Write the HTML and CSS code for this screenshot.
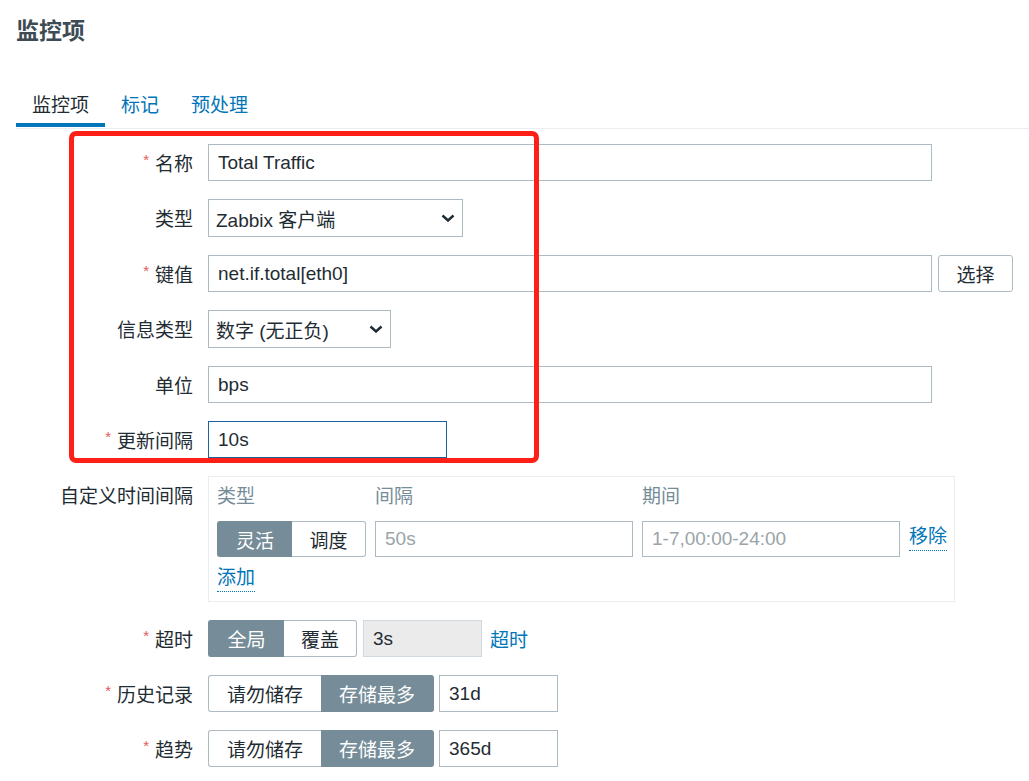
FILE: index.html
```html
<!DOCTYPE html>
<html lang="zh-CN">
<head>
<meta charset="utf-8">
<title>监控项</title>
<link rel="stylesheet" href="styles.css">
</head>
<body>
<div class="page">
  <h1 class="title">监控项</h1>
  <nav class="tabs">
    <a class="tab active">监控项</a>
    <a class="tab">标记</a>
    <a class="tab">预处理</a>
  </nav>
  <form class="form">
    <label class="label"><span class="req">*</span>名称</label>
    <div class="ctrl"><input class="input w-full" type="text" value="Total Traffic"></div>

    <label class="label">类型</label>
    <div class="ctrl"><div class="select w-type"><span>Zabbix 客户端</span><svg class="chev" width="14" height="8" viewBox="0 0 14 8"><path d="M1.5 1.5 L7 6.5 L12.5 1.5" fill="none" stroke="#1f2c33" stroke-width="2.4"/></svg></div></div>

    <label class="label"><span class="req">*</span>键值</label>
    <div class="ctrl"><input class="input w-full" type="text" value="net.if.total[eth0]"><button type="button" class="btn">选择</button></div>

    <label class="label">信息类型</label>
    <div class="ctrl"><div class="select w-info"><span>数字 (无正负)</span><svg class="chev" width="14" height="8" viewBox="0 0 14 8"><path d="M1.5 1.5 L7 6.5 L12.5 1.5" fill="none" stroke="#1f2c33" stroke-width="2.4"/></svg></div></div>

    <label class="label">单位</label>
    <div class="ctrl"><input class="input w-full" type="text" value="bps"></div>

    <label class="label"><span class="req">*</span>更新间隔</label>
    <div class="ctrl"><input class="input w-upd focus" type="text" value="10s"></div>

    <label class="label">自定义时间间隔</label>
    <div class="ctrl">
      <div class="intervals">
        <div class="int-grid">
          <div class="int-head">类型</div>
          <div class="int-head">间隔</div>
          <div class="int-head">期间</div>
          <div></div>
          <div class="seg">
            <span class="seg-item on s-75">灵活</span><span class="seg-item s-74">调度</span>
          </div>
          <input class="input w-258" type="text" placeholder="50s">
          <input class="input w-258" type="text" placeholder="1-7,00:00-24:00">
          <div class="remove-cell"><a class="link dotted">移除</a></div>
        </div>
        <div class="int-add"><a class="link dotted">添加</a></div>
      </div>
    </div>

    <label class="label"><span class="req">*</span>超时</label>
    <div class="ctrl">
      <div class="seg"><span class="seg-item on s-76">全局</span><span class="seg-item s-73">覆盖</span></div>
      <input class="input w-119 disabled" type="text" value="3s" disabled>
      <a class="link plain">超时</a>
    </div>

    <label class="label"><span class="req">*</span>历史记录</label>
    <div class="ctrl ctrl-tight">
      <div class="seg"><span class="seg-item s-113">请勿储存</span><span class="seg-item on s-113">存储最多</span></div>
      <input class="input w-119" type="text" value="31d">
    </div>

    <label class="label"><span class="req">*</span>趋势</label>
    <div class="ctrl ctrl-tight">
      <div class="seg"><span class="seg-item s-113">请勿储存</span><span class="seg-item on s-113">存储最多</span></div>
      <input class="input w-119" type="text" value="365d">
    </div>
  </form>
  <div class="annot"></div>
</div>
</body>
</html>
```

FILE: styles.css
```css
* { box-sizing: border-box; }
html, body {
  margin: 0;
  padding: 0;
  background: #ffffff;
}
body {
  font-family: "Liberation Sans", "Noto Sans CJK SC", sans-serif;
  font-size: 19px;
  color: #1f2c33;
  overflow: hidden;
}
.page {
  position: relative;
  width: 1029px;
  height: 781px;
}
.title {
  margin: 0 0 0 16px;
  padding-top: 16px;
  font-size: 23px;
  line-height: 30px;
  font-weight: bold;
  color: #3e4b55;
}
.tabs {
  display: flex;
  margin: 42px 0 0 16px;
  padding-bottom: 1px;
  border-bottom: 1px solid #ebeef0;
}
.tab {
  display: flex;
  align-items: center;
  height: 39px;
  padding: 0 16px 5px;
  border-bottom: 4px solid transparent;
  color: #0275b8;
  cursor: pointer;
}
.tab.active {
  color: #1f2c33;
  border-bottom-color: #0275b8;
}
.form {
  display: grid;
  grid-template-columns: 193px 1fr;
  column-gap: 15px;
  row-gap: 18px;
  padding-top: 15px;
}
.label {
  display: flex;
  align-items: center;
  justify-content: flex-end;
  height: 37px;
  white-space: nowrap;
}
.req {
  color: #e45959;
  font-size: 15px;
  margin-right: 6px;
  margin-top: -6px;
}
.ctrl {
  display: flex;
  align-items: center;
  gap: 6px;
}
.ctrl-tight { gap: 5px; }
.input {
  height: 37px;
  padding: 0 9px;
  border: 1px solid #acbbc2;
  border-radius: 0;
  background: #ffffff;
  font-family: inherit;
  font-size: 19px;
  color: #1f2c33;
  outline: none;
}
.input::placeholder { color: #9aa4a9; }
.w-full { width: 724px; }
.w-upd { width: 239px; }
.w-258 { width: 258px; }
.w-119 { width: 119px; }
.focus { border-color: #1a63a0; }
.disabled {
  background: #ebebeb;
  border-color: #d2dadf;
  color: #1f2c33;
  -webkit-text-fill-color: #1f2c33;
}
.select {
  display: flex;
  align-items: center;
  justify-content: space-between;
  height: 38px;
  padding: 0 7px 0 7px;
  border: 1px solid #acbbc2;
  background: #ffffff;
}
.w-type { width: 255px; }
.w-info { width: 183px; }
.chev { display: block; }
.btn {
  width: 75px;
  height: 37px;
  border: 1px solid #acbbc2;
  border-radius: 3px;
  background: #ffffff;
  font-family: inherit;
  font-size: 19px;
  color: #1f2c33;
  padding: 0;
}
.intervals {
  width: 747px;
  height: 126px;
  border: 1px solid #ebeef0;
  padding: 6px 8px 7px;
}
.int-grid {
  display: grid;
  grid-template-columns: 149px 258px 258px 1fr;
  column-gap: 9px;
  row-gap: 10px;
  align-items: center;
}
.int-head {
  height: 28px;
  line-height: 28px;
  color: #768d99;
}
.remove-cell {
  white-space: nowrap;
  margin-top: -2px;
}
.int-add {
  margin-top: 9px;
  height: 28px;
}
.seg {
  display: flex;
  height: 37px;
}
.int-grid .seg { height: 36px; }
.int-grid .input { height: 36px; }
.seg-item {
  display: flex;
  align-items: center;
  justify-content: center;
  border: 1px solid #acbbc2;
  background: #ffffff;
  color: #1f2c33;
}
.seg-item:first-child {
  border-radius: 3px 0 0 3px;
  border-right: none;
}
.seg-item:last-child {
  border-radius: 0 3px 3px 0;
  border-left: none;
}
.seg-item.on {
  background: #768d99;
  border-color: #768d99;
  color: #ffffff;
}
.s-73 { width: 73px; }
.s-74 { width: 74px; }
.s-75 { width: 75px; }
.s-76 { width: 76px; }
.s-113 { width: 113px; }
.link {
  color: #0275b8;
  cursor: pointer;
  text-decoration: none;
}
.link.plain { margin-left: 2px; }
.dotted {
  display: inline-block;
  height: 26px;
  line-height: 24px;
  border-bottom: 1px dotted #0275b8;
}
.annot {
  position: absolute;
  left: 69px;
  top: 131px;
  width: 470px;
  height: 332px;
  border: 5px solid #fe1f16;
  border-radius: 7px;
  pointer-events: none;
}
```
